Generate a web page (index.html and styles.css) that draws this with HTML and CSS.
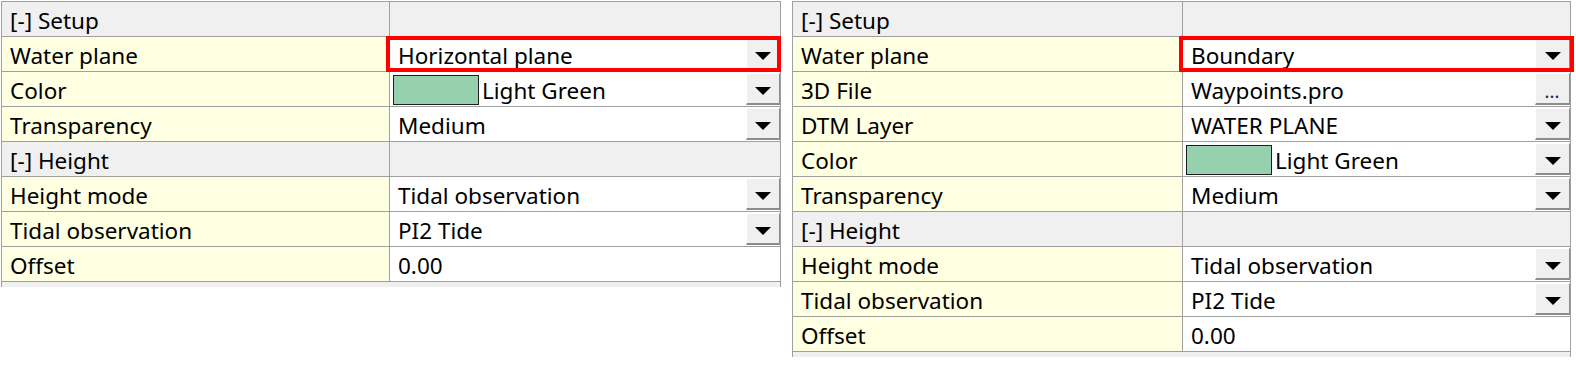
FILE: index.html
```html
<!DOCTYPE html>
<html lang="en">
<head>
    <meta charset="UTF-8">
    <title>Water plane properties</title>
    <link rel="stylesheet" href="styles.css">
</head>
<body>

<div class="page">

    <!-- horizontal plane variant -->
    <div class="grid grid-left">
        <div class="row cat">
            <div class="name">[-] Setup</div>
            <div class="value"></div>
        </div>
        <div class="row">
            <div class="name">Water plane</div>
            <div class="value marked">
                <span class="text">Horizontal plane</span>
                <span class="btn drop"><i class="arrow"></i></span>
                <span class="highlight"></span>
            </div>
        </div>
        <div class="row">
            <div class="name">Color</div>
            <div class="value">
                <span class="swatch"></span><span class="text swatch-text">Light Green</span>
                <span class="btn drop"><i class="arrow"></i></span>
            </div>
        </div>
        <div class="row">
            <div class="name">Transparency</div>
            <div class="value">
                <span class="text">Medium</span>
                <span class="btn drop"><i class="arrow"></i></span>
            </div>
        </div>
        <div class="row cat">
            <div class="name">[-] Height</div>
            <div class="value"></div>
        </div>
        <div class="row">
            <div class="name">Height mode</div>
            <div class="value">
                <span class="text">Tidal observation</span>
                <span class="btn drop"><i class="arrow"></i></span>
            </div>
        </div>
        <div class="row">
            <div class="name">Tidal observation</div>
            <div class="value">
                <span class="text">PI2 Tide</span>
                <span class="btn drop"><i class="arrow"></i></span>
            </div>
        </div>
        <div class="row">
            <div class="name">Offset</div>
            <div class="value"><span class="text">0.00</span></div>
        </div>
        <div class="foot"></div>
    </div>

    <!-- boundary variant -->
    <div class="grid grid-right">
        <div class="row cat">
            <div class="name">[-] Setup</div>
            <div class="value"></div>
        </div>
        <div class="row">
            <div class="name">Water plane</div>
            <div class="value marked">
                <span class="text">Boundary</span>
                <span class="btn drop"><i class="arrow"></i></span>
                <span class="highlight"></span>
            </div>
        </div>
        <div class="row">
            <div class="name">3D File</div>
            <div class="value">
                <span class="text">Waypoints.pro</span>
                <span class="btn dots">...</span>
            </div>
        </div>
        <div class="row">
            <div class="name">DTM Layer</div>
            <div class="value">
                <span class="text">WATER PLANE</span>
                <span class="btn drop"><i class="arrow"></i></span>
            </div>
        </div>
        <div class="row">
            <div class="name">Color</div>
            <div class="value">
                <span class="swatch"></span><span class="text swatch-text">Light Green</span>
                <span class="btn drop"><i class="arrow"></i></span>
            </div>
        </div>
        <div class="row">
            <div class="name">Transparency</div>
            <div class="value">
                <span class="text">Medium</span>
                <span class="btn drop"><i class="arrow"></i></span>
            </div>
        </div>
        <div class="row cat">
            <div class="name">[-] Height</div>
            <div class="value"></div>
        </div>
        <div class="row">
            <div class="name">Height mode</div>
            <div class="value">
                <span class="text">Tidal observation</span>
                <span class="btn drop"><i class="arrow"></i></span>
            </div>
        </div>
        <div class="row">
            <div class="name">Tidal observation</div>
            <div class="value">
                <span class="text">PI2 Tide</span>
                <span class="btn drop"><i class="arrow"></i></span>
            </div>
        </div>
        <div class="row">
            <div class="name">Offset</div>
            <div class="value"><span class="text">0.00</span></div>
        </div>
        <div class="foot"></div>
    </div>

</div>

</body>
</html>
```

FILE: styles.css
```css
body {
    margin: 0;
    background: #fff;
    font-family: "Noto Sans", "Open Sans", sans-serif;
    font-size: 22.5px;
    color: #000;
}

.page {
    display: flex;
    align-items: flex-start;
    gap: 11px;
    padding: 1px 0 0 1px;
}

.grid {
    border-top: 1px solid #a0a0a0;
    border-left: 1px solid #a0a0a0;
    border-right: 1px solid #a0a0a0;
}

.grid-left {
    width: 778px;
}

.grid-right {
    width: 777px;
}

.row {
    display: grid;
    border-bottom: 1px solid #a0a0a0;
}

.grid-left .row {
    grid-template-columns: 388px 1fr;
}

.grid-right .row {
    grid-template-columns: 390px 1fr;
}

.name,
.value {
    height: 34px;
    box-sizing: border-box;
    white-space: nowrap;
}

.name {
    background: #ffffe1;
    border-right: 1px solid #a0a0a0;
    padding: 4px 0 0 8px;
    line-height: 30px;
}

.value {
    position: relative;
    display: flex;
    align-items: flex-start;
    background: #fff;
}

.value .text {
    padding: 4px 0 0 8px;
    line-height: 30px;
    flex: 1;
}

.cat .name,
.cat .value {
    background: #f0f0f0;
}

.swatch {
    width: 86px;
    height: 30px;
    box-sizing: border-box;
    margin: 3px 0 0 3px;
    background: #96d0ad;
    border: 1px solid #1e1e1e;
    flex-shrink: 0;
}

.value .swatch-text {
    padding-left: 3px;
}

/* little 3d push buttons at the right of a cell */
.btn {
    width: 34px;
    height: 32px;
    box-sizing: border-box;
    margin-top: 1px;
    background: #f0f0f0;
    border-top: 1px solid #fff;
    border-left: 1px solid #fff;
    border-right: 1px solid #8c8c8c;
    border-bottom: 2px solid #8c8c8c;
    flex-shrink: 0;
    display: flex;
    justify-content: center;
}

.grid-right .btn {
    width: 35px;
}

.drop {
    align-items: center;
    padding-top: 4px;
}

.arrow {
    width: 0;
    height: 0;
    border-left: 8px solid transparent;
    border-right: 8px solid transparent;
    border-top: 8px solid #000;
}

.dots {
    align-items: flex-end;
    font-size: 14px;
    font-weight: bold;
    line-height: 14px;
    letter-spacing: 1px;
    color: #1a2a50;
    padding-bottom: 3px;
}

.highlight {
    position: absolute;
    top: -1px;
    left: -4px;
    right: -1px;
    bottom: -1px;
    border: 4px solid #f00;
    pointer-events: none;
}

.grid-right .highlight {
    right: -4px;
}

.foot {
    height: 5px;
    background: #f0f0f0;
}
```
